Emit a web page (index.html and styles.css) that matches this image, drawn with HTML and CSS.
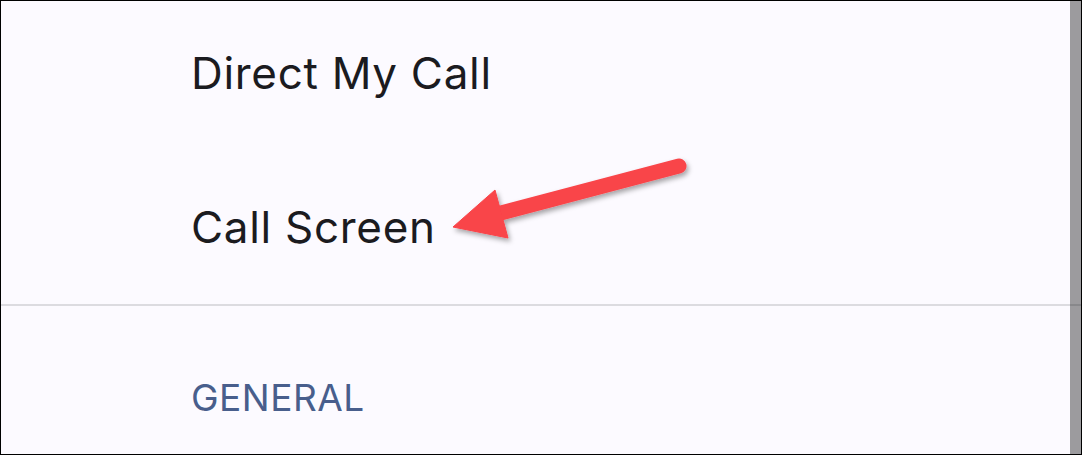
FILE: index.html
```html
<!DOCTYPE html>
<html lang="en">
<head>
    <meta charset="UTF-8">
    <meta name="viewport" content="width=device-width, initial-scale=1.0">
    <title>Call settings</title>
    <link rel="stylesheet" href="styles.css">
</head>
<body>
<div class="screen">
    <ul class="menu">
        <li class="menu-item">Direct My Call</li>
        <li class="menu-item">Call Screen</li>
    </ul>
    <hr class="divider">
    <div class="section-title">GENERAL</div>

    <div class="scrollbar"></div>

    <svg class="arrow" width="1080" height="453" viewBox="0 0 1080 453">
        <defs>
            <filter id="shadow" x="-10%" y="-30%" width="120%" height="160%">
                <feDropShadow dx="2" dy="3" stdDeviation="2.5" flood-color="#000" flood-opacity="0.35"/>
            </filter>
        </defs>
        <g filter="url(#shadow)" fill="#f94449" stroke="#f94449">
            <line x1="678" y1="165" x2="496" y2="213" stroke-width="15" stroke-linecap="round"/>
            <polygon points="452,226 494,189 507,237" stroke-width="1" stroke-linejoin="round"/>
        </g>
    </svg>
</div>
</body>
</html>
```

FILE: styles.css
```css
* {
    box-sizing: border-box;
}

body {
    margin: 0;
    padding: 0;
    background-color: #fff;
    font-family: Inter, Roboto, 'Noto Sans', Arial, sans-serif;
}

.screen {
    position: relative;
    width: 1082px;
    height: 455px;
    border: 1px solid #000;
    background-color: #fcfaff;
    overflow: hidden;
}

.menu {
    list-style: none;
    margin: -5px 0 0;
    padding: 0;
}

.menu-item {
    padding: 51px 0 51px 190px;
    font-size: 44px;
    line-height: 52px;
    letter-spacing: 0.7px;
    color: #1b1b1f;
}

.divider {
    margin: 0;
    border: none;
    height: 2px;
    background-color: #dcdbe0;
}

.section-title {
    margin-top: 68px;
    padding-left: 190px;
    font-size: 37px;
    line-height: 48px;
    letter-spacing: 0.5px;
    color: #485e8c;
}

.scrollbar {
    position: absolute;
    top: 0;
    right: 0;
    width: 11px;
    height: 100%;
    background-color: rgba(0, 0, 0, 0.38);
}

.arrow {
    position: absolute;
    top: 0;
    left: 0;
    pointer-events: none;
}
```
